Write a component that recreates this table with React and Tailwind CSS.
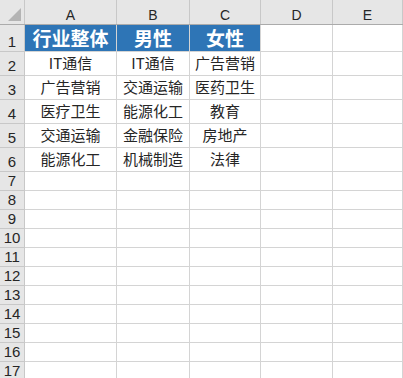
import React from 'react';

const COLS = [
  { key: 'A', width: 'w-[92px]' },
  { key: 'B', width: 'w-[73px]' },
  { key: 'C', width: 'w-[71px]' },
  { key: 'D', width: 'w-[72px]' },
  { key: 'E', width: 'flex-1' },
];

const HEADER = ['行业整体', '男性', '女性'];

const DATA = [
  ['IT通信', 'IT通信', '广告营销'],
  ['广告营销', '交通运输', '医药卫生'],
  ['医疗卫生', '能源化工', '教育'],
  ['交通运输', '金融保险', '房地产'],
  ['能源化工', '机械制造', '法律'],
];

const font = { fontFamily: '"Noto Sans CJK SC", "Noto Sans", sans-serif' };

function RowLabel({ n, height }) {
  return (
    <div
      className={`w-[25px] shrink-0 ${height} bg-[#e6e6e6] border-r border-b border-[#c8c8c8] flex items-end justify-center text-[15px] leading-[18px] text-[#262626] font-['Liberation_Sans',sans-serif]`}
    >
      {n}
    </div>
  );
}

function App() {
  const emptyRows = Array.from({ length: 11 }, (_, i) => i + 7);

  return (
    <div className="w-[403px] h-[378px] overflow-hidden bg-white flex flex-col" style={font}>
      {/* column headers */}
      <div className="flex h-[25px] shrink-0 border-b border-[#ababab] bg-[#e6e6e6]">
        <div className="w-[25px] shrink-0 border-r border-[#c8c8c8] relative">
          <div className="absolute right-[3px] bottom-[3px] w-0 h-0 border-l-[13px] border-l-transparent border-b-[13px] border-b-[#b4b4b4]" />
        </div>
        {COLS.map((c) => (
          <div
            key={c.key}
            className={`${c.width} shrink-0 border-r border-[#c8c8c8] flex items-center justify-center pt-[6px] text-[14px] text-[#262626] font-['Liberation_Sans',sans-serif]`}
          >
            {c.key}
          </div>
        ))}
      </div>

      {/* row 1 */}
      <div className="flex shrink-0">
        <RowLabel n={1} height="h-[27px]" />
        {COLS.map((c, i) => (
          <div
            key={c.key}
            className={`${c.width} shrink-0 h-[27px] border-r border-b border-[#d4d4d4] flex items-center justify-center ${
              i < 3 ? 'bg-[#2e75b6] text-white font-bold text-[19px]' : ''
            }`}
          >
            {HEADER[i] || ''}
          </div>
        ))}
      </div>

      {/* rows 2-6 */}
      {DATA.map((row, r) => (
        <div key={r} className="flex shrink-0">
          <RowLabel n={r + 2} height="h-[24px]" />
          {COLS.map((c, i) => (
            <div
              key={c.key}
              className={`${c.width} shrink-0 h-[24px] border-r border-b border-[#d4d4d4] flex items-center justify-center text-[15px] text-[#262626]`}
            >
              {row[i] || ''}
            </div>
          ))}
        </div>
      ))}

      {/* empty rows */}
      {emptyRows.map((n) => (
        <div key={n} className="flex shrink-0">
          <RowLabel n={n} height="h-[19px]" />
          {COLS.map((c) => (
            <div key={c.key} className={`${c.width} shrink-0 h-[19px] border-r border-b border-[#d4d4d4]`} />
          ))}
        </div>
      ))}
    </div>
  );
}

export default App;
